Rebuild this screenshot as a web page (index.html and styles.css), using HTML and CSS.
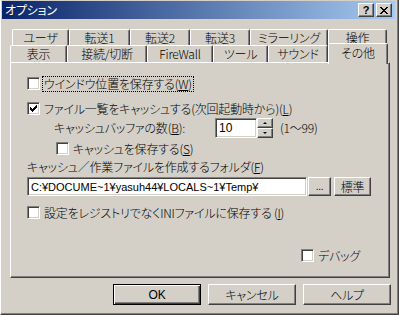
FILE: index.html
```html
<!DOCTYPE html>
<html>
	<head>
		<meta charset="UTF-8">
		<title>オプション</title>
		<link rel="stylesheet" href="styles.css">
	</head>
	<body>
		<div class="window">
			<div class="titlebar">
				<span class="title">オプション</span>
				<div class="caption-btns">
					<span class="cbtn">?</span>
					<span class="cbtn close">
						<svg width="8" height="7" viewBox="0 0 8 7" shape-rendering="crispEdges"><path d="M0 0h2v1h1v1h2v-1h1v-1h2v1h-1v1h-1v1h-1v1h1v1h1v1h1v1h-2v-1h-1v-1h-2v1h-1v1h-2v-1h1v-1h1v-1h1v-1h-1v-1h-1v-1h-1z" fill="#000"/></svg>
					</span>
				</div>
			</div>
			<div class="client">
				<div class="tabs">
					<div class="tab-row back">
						<div class="tab">ユーザ</div>
						<div class="tab">転送1</div>
						<div class="tab">転送2</div>
						<div class="tab">転送3</div>
						<div class="tab">ミラーリング</div>
						<div class="tab">操作</div>
					</div>
					<div class="tab-row front">
						<div class="tab">表示</div>
						<div class="tab">接続/切断</div>
						<div class="tab">FireWall</div>
						<div class="tab">ツール</div>
						<div class="tab">サウンド</div>
						<div class="tab selected">その他</div>
					</div>
				</div>
				<div class="panel">
					<div class="row row-window">
						<span class="checkbox"></span>
						<span class="label focus">ウインドウ位置を保存する(<u>W</u>)</span>
					</div>
					<div class="row row-cache">
						<span class="checkbox">
							<svg width="7" height="7" viewBox="0 0 7 7" shape-rendering="crispEdges" fill="#000"><rect x="0" y="2" width="1" height="3"/><rect x="1" y="3" width="1" height="3"/><rect x="2" y="4" width="1" height="3"/><rect x="3" y="3" width="1" height="3"/><rect x="4" y="2" width="1" height="3"/><rect x="5" y="1" width="1" height="3"/><rect x="6" y="0" width="1" height="3"/></svg>
						</span>
						<span class="label">ファイル一覧をキャッシュする(次回起動時から)(<u>L</u>)</span>
					</div>
					<div class="row row-buffer">
						<span class="label buffer-label">キャッシュバッファの数(<u>B</u>):</span>
						<div class="spin">
							<span class="field spin-field">10</span>
							<div class="spin-btns">
								<span class="spin-btn"><i class="arrow up"></i></span>
								<span class="spin-btn"><i class="arrow down"></i></span>
							</div>
						</div>
						<span class="label range">(1～99)</span>
					</div>
					<div class="row row-save">
						<span class="checkbox"></span>
						<span class="label">キャッシュを保存する(<u>S</u>)</span>
					</div>
					<div class="folder-label">キャッシュ／作業ファイルを作成するフォルダ(<u>F</u>)</div>
					<div class="row row-folder">
						<span class="field path-field">C:¥DOCUME~1¥yasuh44¥LOCALS~1¥Temp¥</span>
						<span class="btn browse">...</span>
						<span class="btn std">標準</span>
					</div>
					<div class="row row-ini">
						<span class="checkbox"></span>
						<span class="label">設定をレジストリでなくINIファイルに保存する (<u>I</u>)</span>
					</div>
					<div class="row row-debug">
						<span class="checkbox"></span>
						<span class="label">デバッグ</span>
					</div>
				</div>
				<div class="buttons">
					<span class="btn dlg default">OK</span>
					<span class="btn dlg">キャンセル</span>
					<span class="btn dlg">ヘルプ</span>
				</div>
			</div>
		</div>
	</body>
</html>
```

FILE: styles.css
```css
/* 全体 */
* {
	margin: 0;
	padding: 0;
	box-sizing: border-box;
}
body {
	background: #d4d0c8;
	font-family: "Noto Sans CJK JP", "Liberation Sans", sans-serif;
	font-size: 12px;
	font-weight: 300;
	line-height: 14px;
	color: #000;
	font-feature-settings: "palt";
	letter-spacing: -0.2px;
}
u {
	text-decoration: underline;
	text-underline-offset: 1px;
}

/* ウインドウ枠 */
.window {
	width: 399px;
	height: 315px;
	padding: 1px 3px 3px 1px;
	background: #d4d0c8;
	border-left: 1px solid #fff;
	border-right: 1px solid #404040;
	border-bottom: 1px solid #404040;
	box-shadow: inset -1px -1px #808080;
}
.titlebar {
	height: 18px;
	display: flex;
	align-items: center;
	justify-content: space-between;
	padding: 0 3px 0 3px;
	background: linear-gradient(to right, #0a246a, #a6caf0);
}
.title {
	color: #fff;
	font-weight: 400;
}
.caption-btns {
	display: flex;
	gap: 2px;
}
.cbtn {
	width: 16px;
	height: 14px;
	display: flex;
	align-items: center;
	justify-content: center;
	background: #d4d0c8;
	border: 1px solid;
	border-color: #fff #404040 #404040 #fff;
	box-shadow: inset -1px -1px #808080;
	font-family: "Liberation Sans", sans-serif;
	font-weight: bold;
	font-size: 11px;
	line-height: 10px;
}

/* タブ */
.client {
	padding: 0 4px 0 8px;
}
.tabs {
	padding-top: 10px;
}
.tab-row {
	display: flex;
	height: 17px;
	align-items: flex-start;
}
.tab-row.back {
	height: 16px;
	padding-left: 2px;
}
.tab {
	height: 17px;
	display: flex;
	align-items: center;
	justify-content: center;
	background: #d4d0c8;
	border-left: 1px solid #fff;
	border-top: 1px solid #fff;
	border-right: 1px solid #404040;
	box-shadow: inset -1px 0 #808080;
	border-top-left-radius: 2px;
	border-top-right-radius: 2px;
	line-height: 12px;
}
.back .tab {
	align-items: flex-start;
	padding-top: 2px;
}
.back .tab:nth-child(1) { width: 57px; }
.back .tab:nth-child(2) { width: 61px; }
.back .tab:nth-child(3) { width: 60px; }
.back .tab:nth-child(4) { width: 60px; }
.back .tab:nth-child(5) { width: 78px; }
.back .tab:nth-child(6) { width: 59px; }
.front .tab:nth-child(1) { width: 57px; }
.front .tab:nth-child(2) { width: 80px; }
.front .tab:nth-child(3) { width: 66px; }
.front .tab:nth-child(4) { width: 55px; }
.front .tab:nth-child(5) { width: 60px; }
.front .tab:nth-child(6) { width: 60px; }
.tab.selected {
	position: relative;
	z-index: 1;
	margin-top: -2px;
	height: 21px;
	align-items: flex-start;
	padding-top: 3px;
}

/* パネル */
.panel {
	width: 380px;
	height: 216px;
	padding: 14px 0 0 16px;
	border: 1px solid;
	border-color: #fff #404040 #404040 #fff;
	box-shadow: inset -1px -1px #808080;
}
.row {
	display: flex;
	align-items: center;
}
.label {
	padding-left: 4px;
	white-space: nowrap;
}
.label.focus {
	margin-left: 3px;
	padding: 0 1px;
	outline: 1px dotted #000;
}
.checkbox {
	width: 13px;
	height: 13px;
	flex-shrink: 0;
	display: flex;
	align-items: center;
	justify-content: center;
	background: #fff;
	border: 1px solid;
	border-color: #808080 #fff #fff #808080;
	box-shadow: inset 1px 1px #404040, inset -1px -1px #d4d0c8;
}
.row-window {
	height: 13px;
}
.row-cache {
	height: 13px;
	margin-top: 12px;
}
.row-buffer {
	height: 20px;
	margin-top: 3px;
	padding-left: 27px;
}
.buffer-label {
	width: 161px;
	padding-left: 0;
}
.field {
	display: flex;
	align-items: center;
	background: #fff;
	border: 1px solid;
	border-color: #808080 #fff #fff #808080;
	box-shadow: inset 1px 1px #404040, inset -1px -1px #d4d0c8;
	padding-left: 3px;
	font-family: "Liberation Sans", "Noto Sans CJK JP", sans-serif;
	font-weight: 400;
	font-size: 11px;
	letter-spacing: 0;
	white-space: nowrap;
}
.spin {
	display: flex;
}
.spin-field {
	width: 42px;
	height: 20px;
	font-size: 12px;
}
.spin-btns {
	display: flex;
	flex-direction: column;
}
.spin-btn {
	width: 16px;
	height: 10px;
	display: flex;
	align-items: center;
	justify-content: center;
	border: 1px solid;
	border-color: #fff #404040 #404040 #fff;
	box-shadow: inset -1px -1px #808080;
}
.arrow {
	width: 0;
	height: 0;
	border-left: 2px solid transparent;
	border-right: 2px solid transparent;
}
.arrow.up {
	border-bottom: 2px solid #000;
}
.arrow.down {
	border-top: 2px solid #000;
}
.range {
	padding-left: 7px;
}
.row-save {
	height: 13px;
	margin-top: 4px;
	padding-left: 29px;
}
.folder-label {
	margin-top: 6px;
	height: 12px;
	line-height: 12px;
	white-space: nowrap;
}
.row-folder {
	margin-top: 4px;
	height: 19px;
}
.path-field {
	width: 280px;
	height: 19px;
}
.btn {
	display: flex;
	align-items: center;
	justify-content: center;
	background: #d4d0c8;
	border: 1px solid;
	border-color: #fff #404040 #404040 #fff;
	box-shadow: inset -1px -1px #808080;
	white-space: nowrap;
}
.browse {
	width: 23px;
	height: 19px;
	margin-left: 1px;
	font-family: "Liberation Sans", sans-serif;
	font-size: 10px;
}
.std {
	width: 37px;
	height: 19px;
	margin-left: 3px;
}
.row-ini {
	height: 13px;
	margin-top: 10px;
}
.row-debug {
	height: 13px;
	margin-top: 30px;
	margin-left: 274px;
}

/* 下のボタン */
.buttons {
	display: flex;
	justify-content: flex-end;
	gap: 7px;
	margin-top: 6px;
}
.btn.dlg {
	width: 88px;
	height: 21px;
}
.btn.default {
	border: 1px solid #000;
	box-shadow: inset 1px 1px #fff, inset -1px -1px #404040, inset -2px -2px #808080;
	font-family: "Liberation Sans", sans-serif;
	font-weight: 400;
}
```
